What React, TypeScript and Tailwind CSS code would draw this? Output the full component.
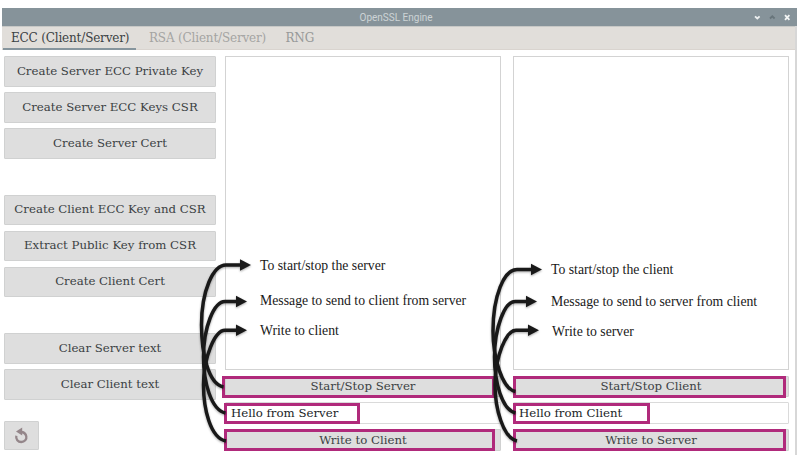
import React from "react";

function Btn({ label, className = "" }: { label: string; className?: string }) {
  return (
    <button
      className={`flex w-full shrink-0 items-center justify-center rounded-[1px] border border-[#d0d1d1] bg-[#dedede] text-[11.75px] leading-none text-[#3b4143] ${className}`}
    >
      <span className="whitespace-nowrap">{label}</span>
    </button>
  );
}

type Note = { text: string; pos: string };

function Pane({
  side,
  notes,
  startBox,
  inputBox,
  writeBox,
}: {
  side: "Server" | "Client";
  notes: Note[];
  startBox: string;
  inputBox: string;
  writeBox: string;
}) {
  const box = "absolute border-[3px] border-[#b02a7b]";
  const other = side === "Server" ? "Client" : "Server";
  return (
    <section className="flex w-[276px] shrink-0 flex-col">
      <div className="relative h-[314px] border border-[#d3d3d3] bg-white">
        {notes.map((n) => (
          <span
            key={n.text}
            className={`absolute whitespace-nowrap font-['Liberation_Serif',serif] text-[13.75px] leading-[16px] text-[#191919] ${n.pos}`}
          >
            {n.text}
          </span>
        ))}
      </div>
      <div className="relative mt-[6px]">
        <Btn label={`Start/Stop ${side}`} className="h-[21px]" />
        <div className={`${box} ${startBox}`} />
      </div>
      <div className="relative mt-[5px] flex h-[22px] items-center rounded-[1px] border border-[#dadada] bg-white pl-[5px] pt-[2px] text-[11.75px] leading-none text-[#202426]">
        <span className="whitespace-nowrap">Hello from {side}</span>
        <div className={`${box} ${inputBox}`} />
      </div>
      <div className="relative mt-[5px]">
        <Btn label={`Write to ${other}`} className="h-[22px] pt-[2px]" />
        <div className={`${box} ${writeBox}`} />
      </div>
    </section>
  );
}

const arrows = [
  { line: "M223.5 387C208 384 201.5 352 201.5 325C201.5 291 213 265 226 265H241", tip: "240,259.3 251,265 240,270.7" },
  { line: "M225.5 413C211 410 203.5 382 203.5 357C203.5 327 214 301.5 225 301.5H237", tip: "236,295.8 247,301.5 236,307.2" },
  { line: "M226 441C210 438 203.5 408 203.5 385C203.5 357 215 330.3 225 330.3H237", tip: "236,324.6 247,330.3 236,336" },
  { line: "M515.5 391.5C502 389 493 357 493 331C493 296 504 269.5 517 269.5H532", tip: "531,263.8 542,269.5 531,275.2" },
  { line: "M515.5 413C502 410 494.5 382 494.5 357C494.5 327 505 301.5 515 301.5H527", tip: "526,295.8 537,301.5 526,307.2" },
  { line: "M517 441C503 438 495 408 495 385C495 357 506 330.3 516 330.3H529", tip: "528,324.6 539,330.3 528,336" },
];

export default function App() {
  return (
    <div className="relative h-[460px] w-[801px] overflow-hidden bg-white pl-[2px] pt-[8px] font-['DejaVu_Serif',serif]">
      <div className="flex h-[447px] w-[795px] flex-col">
        <header className="flex h-[18px] w-full shrink-0 items-center bg-[#86939a] font-['Roboto',sans-serif] text-[10px] leading-none text-[#cdd3d6]">
          <span className="ml-[357.5px] mt-[1px] w-[75px] whitespace-nowrap">OpenSSL Engine</span>
          <svg className="ml-auto" width="43" height="18" viewBox="0 0 43 18" fill="none">
            <path d="M1 8.3L3.3 10.5L5.6 8.3" stroke="#edf0f1" strokeWidth="1.8" />
            <path d="M16 10.5L18.3 8.3L20.6 10.5" stroke="#68757b" strokeWidth="1.8" />
            <path d="M31 7.2L35.4 11.8M35.4 7.2L31 11.8" stroke="#f3f5f5" strokeWidth="1.8" />
          </svg>
        </header>
        <div className="flex min-h-0 flex-1 flex-col border-r-2 border-[#d7d7d7]">
          <nav className="flex h-[24px] w-full shrink-0 border-b border-t border-b-[#d9d4cf] border-t-[#c7c8c6] bg-[#e1deda] text-[12px] leading-none tracking-[-0.17px]">
            <div className="ml-[1px] flex h-[23px] w-[133px] shrink-0 items-center border-b-2 border-[#86959d] pl-[8px] pt-px text-[#3b4143]">
              <span className="whitespace-nowrap">ECC (Client/Server)</span>
            </div>
            <div className="flex h-[22px] w-[149.5px] shrink-0 items-center pl-[13px] text-[#a4a4a2]">
              <span className="whitespace-nowrap">RSA (Client/Server)</span>
            </div>
            <div className="flex h-[22px] items-center text-[#979998]">RNG</div>
          </nav>
          <main className="flex min-h-0 flex-1 pl-[2px] pt-[6px]">
            <aside className="mr-[9px] flex w-[212px] shrink-0 flex-col">
              <div className="flex flex-col gap-[5px]">
                <Btn label="Create Server ECC Private Key" className="h-[31px]" />
                <Btn label="Create Server ECC Keys CSR" className="h-[31px]" />
                <Btn label="Create Server Cert" className="h-[31px]" />
              </div>
              <div className="mt-[36px] flex flex-col gap-[6px]">
                <Btn label="Create Client ECC Key and CSR" className="h-[30px]" />
                <Btn label="Extract Public Key from CSR" className="h-[30px]" />
                <Btn label="Create Client Cert" className="h-[30px]" />
              </div>
              <div className="mt-[36px] flex flex-col gap-[5px]">
                <Btn label="Clear Server text" className="h-[31px]" />
                <Btn label="Clear Client text" className="h-[31px]" />
              </div>
              <button className="mt-[21px] flex h-[29px] w-[35px] items-center justify-center rounded-[1px] border border-[#d0d1d1] bg-[#dedede]">
                <svg width="15" height="17" viewBox="0 0 15 17" fill="none">
                  <path d="M2.3 8.8C1.6 12.2 4 15 7.2 15C10.6 15 12.9 12.4 12.3 9.4C11.9 7.2 10.1 5.4 7.6 5" stroke="#94868a" strokeWidth="2.3" />
                  <path d="M2 4.6L8.2 .5V8.6Z" fill="#94868a" />
                </svg>
              </button>
            </aside>
            <div className="flex gap-[12px]">
              <Pane
                side="Server"
                notes={[
                  { text: "To start/stop the server", pos: "left-[34px] top-[201px]" },
                  { text: "Message to send to client from server", pos: "left-[34px] top-[236px]" },
                  { text: "Write to client", pos: "left-[34px] top-[266px]" },
                ]}
                startBox="left-[-3px] top-0 h-[22px] w-[273px]"
                inputBox="left-[-2px] top-[-0.5px] h-[21px] w-[136px]"
                writeBox="left-[-1px] top-0 h-[22px] w-[271px]"
              />
              <Pane
                side="Client"
                notes={[
                  { text: "To start/stop the client", pos: "left-[37px] top-[205px]" },
                  { text: "Message to send to server from client", pos: "left-[37px] top-[237px]" },
                  { text: "Write to server", pos: "left-[38px] top-[267px]" },
                ]}
                startBox="left-0 top-0 h-[22px] w-[273px]"
                inputBox="left-[-1px] top-[-0.5px] h-[21px] w-[137px]"
                writeBox="left-0 top-0 h-[22px] w-[273px]"
              />
            </div>
          </main>
        </div>
      </div>
      <svg className="pointer-events-none absolute inset-0 drop-shadow-[0_1px_1px_rgba(0,0,0,0.35)]" width="801" height="460" viewBox="0 0 801 460" fill="none">
        {arrows.map((a) => (
          <g key={a.line}>
            <path d={a.line} stroke="#191919" strokeWidth="3.5" />
            <polygon points={a.tip} fill="#191919" />
          </g>
        ))}
      </svg>
    </div>
  );
}
